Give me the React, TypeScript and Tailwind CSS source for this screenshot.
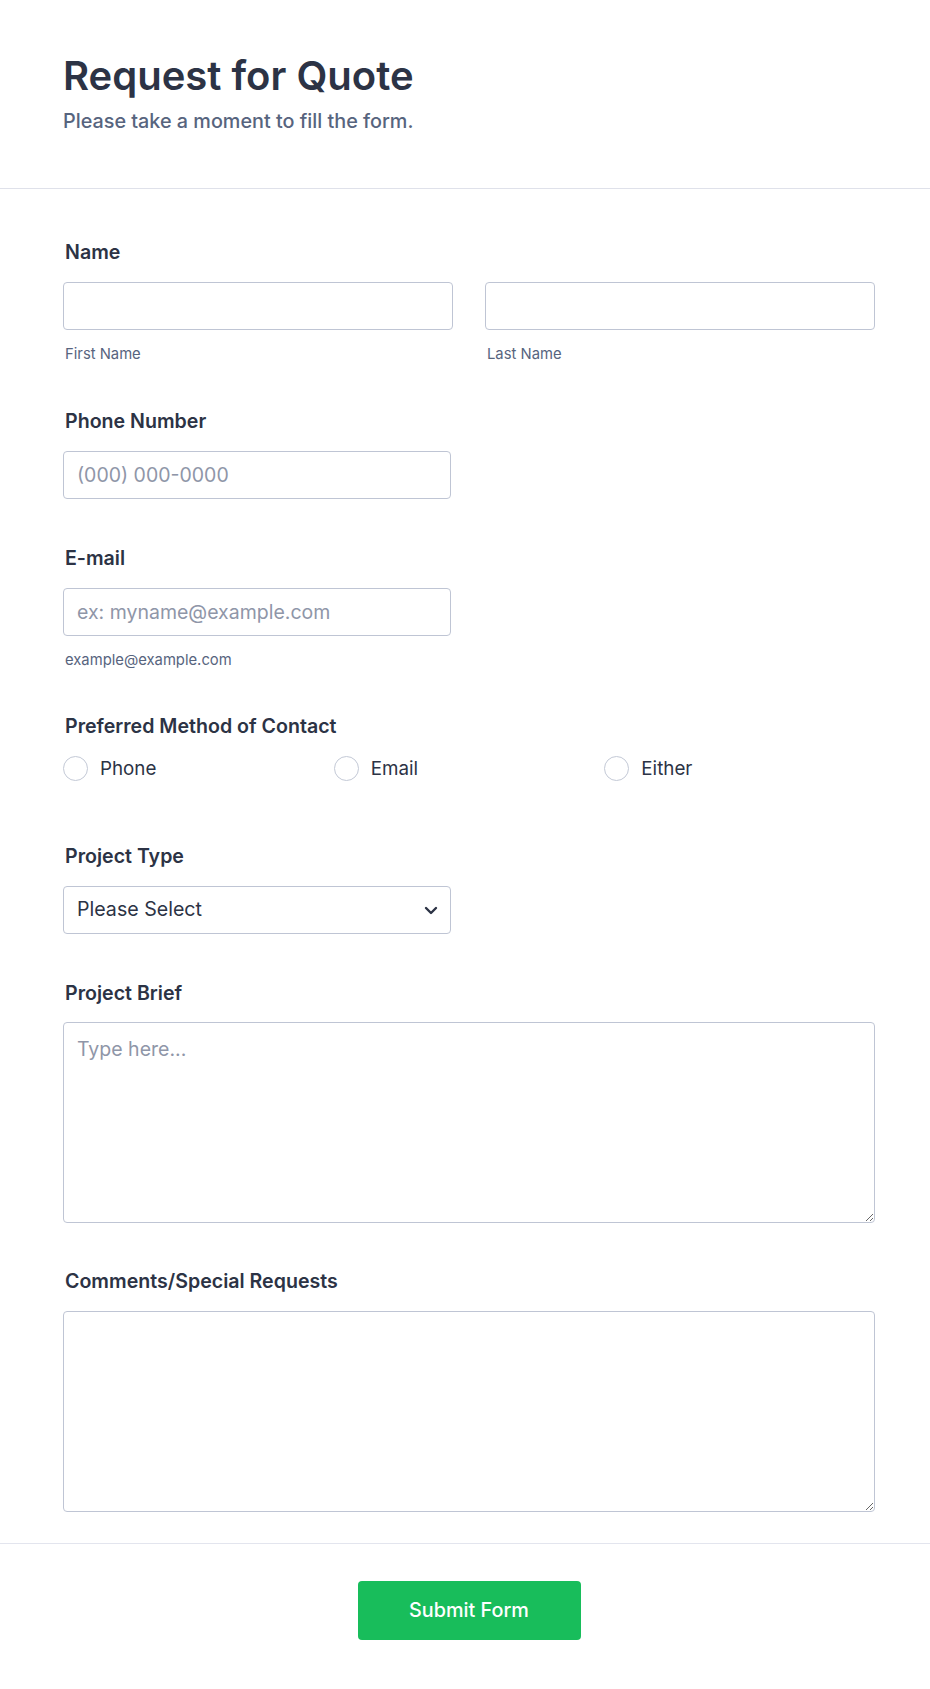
import React from "react";

const font = { fontFamily: "Inter, 'Noto Sans', Arial, sans-serif" };

function Label({ children }: { children: React.ReactNode }) {
  return (
    <div className="pl-[2px] text-[19.6px] leading-6 font-semibold text-[#2c3345]">{children}</div>
  );
}

function Input({ placeholder, className = "" }: { placeholder?: string; className?: string }) {
  return (
    <input
      placeholder={placeholder}
      className={`h-[48px] w-full rounded-[4px] border border-[#bfc5d4] bg-white px-[13px] text-[19.5px] text-[#2c3345] placeholder:text-[#8f96a8] outline-none ${className}`}
    />
  );
}

function Sub({ children }: { children: React.ReactNode }) {
  return <div className="mt-[14px] pl-[2px] text-[14.8px] leading-5 text-[#57647e]">{children}</div>;
}

function Radio({ label }: { label: string }) {
  return (
    <div className="flex items-center">
      <span className="h-[25px] w-[25px] rounded-full border-[1.5px] border-[#c3c9d6] bg-white" />
      <span className="ml-[12px] text-[18.8px] leading-6 text-[#2c3345]">{label}</span>
    </div>
  );
}

export default function App() {
  return (
    <div className="min-h-[1689px] w-full bg-white" style={font}>
      <header className="border-b border-[#dfe1ea] pl-[63px] pr-[55px] pt-[52px] pb-[55px]">
        <h1 className="text-[40px] leading-[48px] font-semibold text-[#2c3345]">Request for Quote</h1>
        <p className="mt-[9px] text-[19.8px] leading-6 font-medium text-[#57647e]">
          Please take a moment to fill the form.
        </p>
      </header>

      <main className="pl-[63px] pr-[55px] pt-[51px]">
        {/* Name */}
        <div>
          <Label>Name</Label>
          <div className="mt-[18px] grid grid-cols-2 gap-[32px]">
            <div>
              <Input />
              <Sub>First Name</Sub>
            </div>
            <div>
              <Input />
              <Sub>Last Name</Sub>
            </div>
          </div>
        </div>

        {/* Phone */}
        <div className="mt-[45px]">
          <Label>Phone Number</Label>
          <div className="mt-[18px] w-[388px]">
            <Input placeholder="(000) 000-0000" />
          </div>
        </div>

        {/* Email */}
        <div className="mt-[47px]">
          <Label>E-mail</Label>
          <div className="mt-[18px] w-[388px]">
            <Input placeholder="ex: myname@example.com" />
          </div>
          <Sub>example@example.com</Sub>
        </div>

        {/* Preferred */}
        <div className="mt-[44px]">
          <Label>Preferred Method of Contact</Label>
          <div className="mt-[18px] grid grid-cols-3">
            <Radio label="Phone" />
            <Radio label="Email" />
            <Radio label="Either" />
          </div>
        </div>

        {/* Project Type */}
        <div className="mt-[63px]">
          <Label>Project Type</Label>
          <div className="mt-[18px] flex h-[48px] w-[388px] items-center justify-between rounded-[4px] border border-[#bfc5d4] bg-white pl-[13px] pr-[12px]">
            <span className="text-[19.6px] text-[#2c3345]">Please Select</span>
            <svg width="14" height="9" viewBox="0 0 14 9" fill="none">
              <path d="M2 2l5 5 5-5" stroke="#2c3345" strokeWidth="2.4" strokeLinecap="round" strokeLinejoin="round" />
            </svg>
          </div>
        </div>

        {/* Project Brief */}
        <div className="mt-[47px]">
          <Label>Project Brief</Label>
          <textarea
            placeholder="Type here..."
            className="mt-[17px] block h-[201px] w-full rounded-[4px] border border-[#bfc5d4] bg-white px-[13px] py-[12px] text-[19.5px] text-[#2c3345] placeholder:text-[#8f96a8] outline-none"
          />
        </div>

        {/* Comments */}
        <div className="mt-[46px]">
          <Label>Comments/Special Requests</Label>
          <textarea className="mt-[18px] block h-[201px] w-full rounded-[4px] border border-[#bfc5d4] bg-white px-[13px] py-[12px] text-[19.5px] text-[#2c3345] outline-none" />
        </div>
      </main>

      <footer className="mt-[31px] border-t border-[#e3e5ee] pl-[63px] pr-[55px] pt-[37px] pb-[50px]">
        <div className="flex justify-center">
          <button className="h-[59px] w-[223px] rounded-[4px] bg-[#18bd5b] text-[19.8px] font-medium text-white">
            Submit Form
          </button>
        </div>
      </footer>
    </div>
  );
}
